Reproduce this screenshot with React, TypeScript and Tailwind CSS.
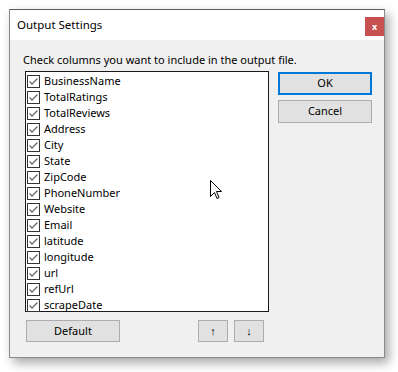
import React from 'react'

const columns = [
  'BusinessName',
  'TotalRatings',
  'TotalReviews',
  'Address',
  'City',
  'State',
  'ZipCode',
  'PhoneNumber',
  'Website',
  'Email',
  'latitude',
  'longitude',
  'url',
  'refUrl',
  'scrapeDate',
]

const font = { fontFamily: '"Noto Sans", "Open Sans", sans-serif' }

function CheckBox() {
  return (
    <svg width="13" height="13" viewBox="0 0 13 13" className="shrink-0">
      <rect x="0.5" y="0.5" width="12" height="12" fill="#fff" stroke="#333" />
      <polyline points="2.5,6.5 5,9 10.5,3.5" fill="none" stroke="#6b6b6b" strokeWidth="1.3" />
    </svg>
  )
}

function Cursor() {
  return (
    <svg width="13" height="21" viewBox="0 0 13 21" className="absolute left-[210px] top-[180px]">
      <path
        d="M0.5 0.5 L0.5 16.5 L4.5 12.5 L7 18.5 L9 17.5 L6.5 11.5 L11.5 11.5 Z"
        fill="#fff"
        stroke="#000"
        strokeWidth="1"
      />
    </svg>
  )
}

function WinButton({
  children,
  focused = false,
  className = '',
}: {
  children: React.ReactNode
  focused?: boolean
  className?: string
}) {
  return (
    <div
      className={`flex items-center justify-center bg-[#e1e1e1] text-[11px] text-black ${
        focused ? 'border-2 border-[#0078d7]' : 'border border-[#adadad]'
      } ${className}`}
    >
      {children}
    </div>
  )
}

export default function App() {
  return (
    <div className="relative h-[372px] w-[398px] bg-white pl-[9px] pt-[9px]" style={font}>
      <div className="flex h-[349px] w-[376px] flex-col border border-[#8a8a8a] border-t-[#5c5c5c] bg-[#f0f0f0] shadow-[4px_5px_10px_rgba(0,0,0,0.35)]">
        <div className="flex h-[30px] items-center justify-between bg-white pl-[7px]">
          <span className="text-[11.5px] text-black">Output Settings</span>
          <div className="mb-[4px] flex h-[19px] w-[19px] items-center justify-center self-end bg-[#c75050] text-[9px] font-bold leading-none text-white">
            x
          </div>
        </div>

        <div className="flex flex-1 flex-col pl-[13px] pt-[11px]">
          <div className="h-[17px] text-[11px] leading-[17px] text-black">
            Check columns you want to include in the output file.
          </div>

          <div className="mt-[3px] flex">
            <div className="ml-[2px] h-[241px] w-[244px] border border-[#1a1a1a] bg-white pl-[1px] pt-[1px]">
              {columns.map((name) => (
                <div key={name} className="flex h-[16px] items-center gap-[4px]">
                  <CheckBox />
                  <span className="text-[11px] leading-[16px] text-black">{name}</span>
                </div>
              ))}
            </div>

            <div className="ml-[9px] flex flex-col gap-[5px] pt-[1px]">
              <WinButton focused className="h-[23px] w-[94px]">OK</WinButton>
              <WinButton className="h-[23px] w-[94px]">Cancel</WinButton>
            </div>
          </div>

          <div className="mt-[8px] flex items-center">
            <WinButton className="ml-[3px] h-[22px] w-[94px]">Default</WinButton>
            <WinButton className="ml-[78px] h-[22px] w-[30px] text-[#50005a]">↑</WinButton>
            <WinButton className="ml-[6px] h-[22px] w-[30px] text-[#1a1a40]">↓</WinButton>
          </div>
        </div>
      </div>
      <Cursor />
    </div>
  )
}
